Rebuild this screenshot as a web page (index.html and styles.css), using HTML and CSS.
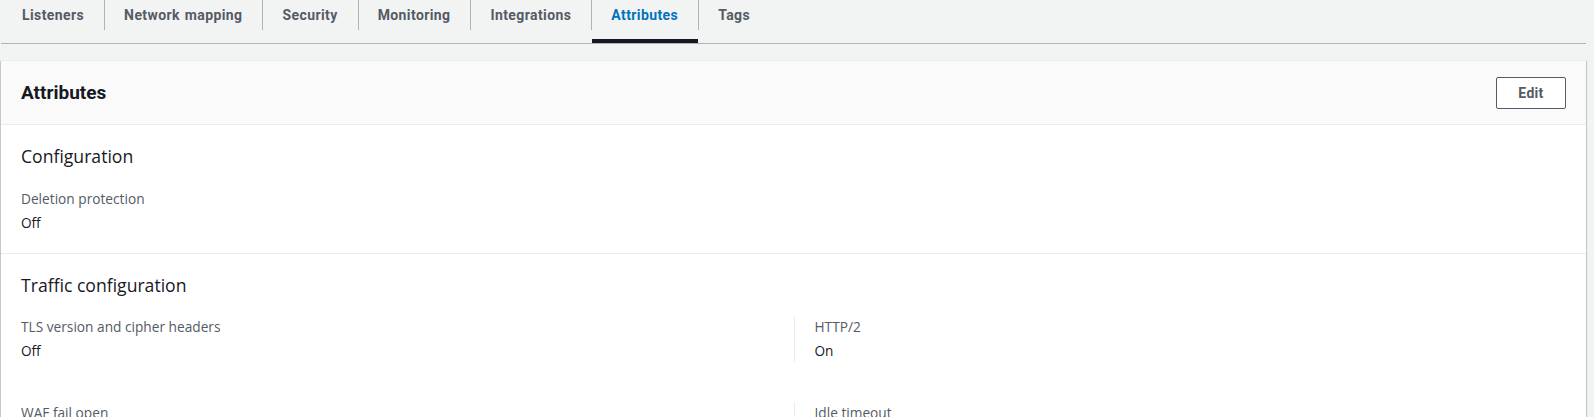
FILE: index.html
```html
<!DOCTYPE html>
<html lang="en">
<head>
<meta charset="utf-8">
<title>Attributes</title>
<link rel="stylesheet" href="styles.css">
</head>
<body>
<div class="page">
  <nav class="tabs">
    <div class="tab">Listeners</div>
    <div class="tab">Network mapping</div>
    <div class="tab">Security</div>
    <div class="tab">Monitoring</div>
    <div class="tab">Integrations</div>
    <div class="tab active">Attributes</div>
    <div class="tab">Tags</div>
  </nav>
  <section class="card">
    <header class="card-header">
      <h2 class="card-title">Attributes</h2>
      <button class="btn">Edit</button>
    </header>
    <div class="section">
      <h3 class="section-title">Configuration</h3>
      <div class="grid">
        <div class="kv">
          <div class="label">Deletion protection</div>
          <div class="value">Off</div>
        </div>
      </div>
    </div>
    <div class="section">
      <h3 class="section-title">Traffic configuration</h3>
      <div class="grid two">
        <div class="kv">
          <div class="label">TLS version and cipher headers</div>
          <div class="value">Off</div>
        </div>
        <div class="kv divided">
          <div class="label">HTTP/2</div>
          <div class="value">On</div>
        </div>
        <div class="kv">
          <div class="label">WAF fail open</div>
          <div class="value">Off</div>
        </div>
        <div class="kv divided">
          <div class="label">Idle timeout</div>
          <div class="value">60 seconds</div>
        </div>
      </div>
    </div>
  </section>
</div>
</body>
</html>
```
FILE: styles.css
```css
html, body {
  margin: 0;
  padding: 0;
  background: #f2f3f3;
}
body {
  font-family: "Open Sans", "Noto Sans", Arial, sans-serif;
  color: #16191f;
  overflow: hidden;
}
.page {
  width: 1585px;
  padding-left: 1px;
}
.tabs {
  display: flex;
  height: 43px;
  border-bottom: 1px solid #aab7b8;
  box-sizing: content-box;
  padding-left: 1px;
}
.tab {
  position: relative;
  font-family: Roboto, Arial, sans-serif;
  font-weight: 700;
  font-size: 14px;
  letter-spacing: 0.4px;
  word-spacing: 1px;
  line-height: 30px;
  color: #545b64;
  padding: 0 20px;
  height: 43px;
  box-sizing: border-box;
}
.tab + .tab::before {
  content: "";
  position: absolute;
  left: 0;
  top: 0;
  height: 30px;
  width: 1px;
  background: #aab7b8;
}
.tab.active {
  color: #0073bb;
}
.tab.active::after {
  content: "";
  position: absolute;
  left: 1px;
  right: 0;
  bottom: 0;
  height: 4px;
  background: #16191f;
}
.card {
  margin-top: 16px;
  background: #fff;
  box-shadow: 0 1px 1px 0 rgba(0,28,36,0.3), 1px 1px 1px 0 rgba(0,28,36,0.15), -1px 1px 1px 0 rgba(0,28,36,0.15);
  border-top: 1px solid #eaeded;
}
.card-header {
  display: flex;
  align-items: center;
  justify-content: space-between;
  height: 64px;
  box-sizing: border-box;
  padding: 0 20px;
  background: #fafafa;
  border-bottom: 1px solid #eaeded;
}
.card-title {
  margin: 0;
  font-family: Roboto, Arial, sans-serif;
  font-weight: 700;
  font-size: 19px;
  line-height: 24px;
  color: #16191f;
}
.btn {
  font-family: Roboto, Arial, sans-serif;
  font-weight: 700;
  font-size: 14px;
  letter-spacing: 0.3px;
  color: #545b64;
  background: #fff;
  border: 1px solid #545b64;
  border-radius: 2px;
  width: 70px;
  height: 32px;
  padding: 0;
}
.section {
  padding: 20px 20px 19px;
  border-bottom: 1px solid #eaeded;
}
.section-title {
  margin: 0;
  font-weight: 400;
  font-size: 17.6px;
  line-height: 22px;
  color: #16191f;
}
.grid {
  margin-top: 21px;
  display: grid;
  grid-template-columns: 1fr;
  row-gap: 40px;
}
.grid.two {
  grid-template-columns: 1fr 1fr;
  margin-top: 20px;
}
.kv {
  display: flex;
  flex-direction: column;
  gap: 2px;
}
.kv.divided {
  border-left: 1px solid #eaeded;
  padding-left: 20px;
}
.label {
  font-size: 13.7px;
  line-height: 22px;
  color: #545b64;
}
.value {
  font-size: 13.6px;
  line-height: 22px;
  color: #16191f;
}
```
